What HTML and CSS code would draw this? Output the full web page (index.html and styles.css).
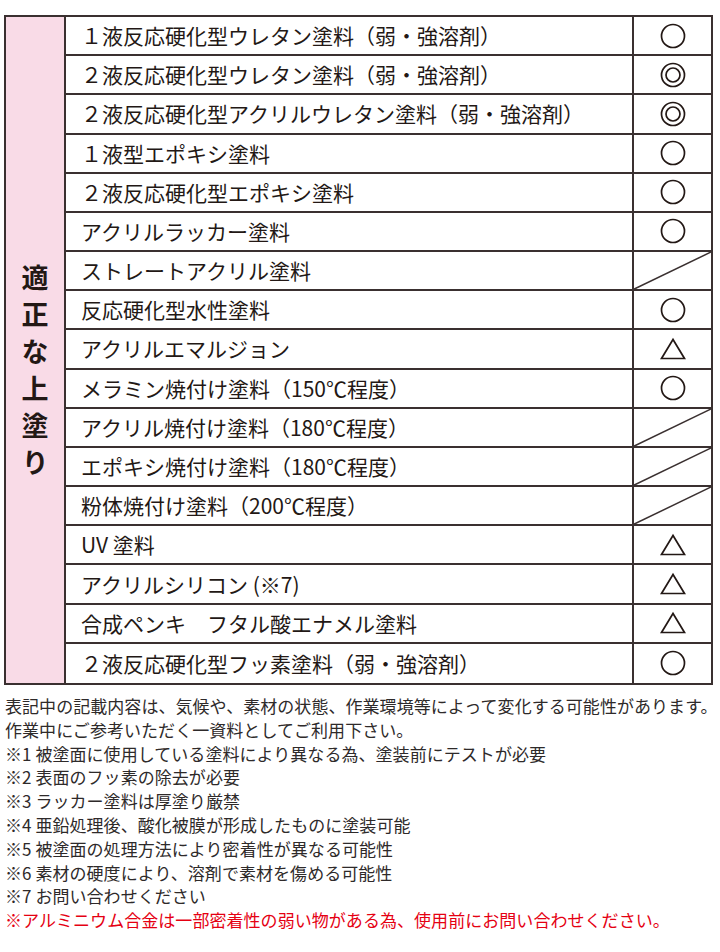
FILE: index.html
```html
<!DOCTYPE html>
<html lang="ja">
<head>
<meta charset="utf-8">
<title>適正な上塗り</title>
<link rel="stylesheet" href="styles.css">
</head>
<body>
<div class="page">
  <div class="chart">
    <div class="label"><span class="label-text">適正な上塗り</span></div>

    <div class="name">１液反応硬化型ウレタン塗料（弱・強溶剤）</div>
    <div class="mark"><svg class="sym" viewBox="0 0 26 26"><circle cx="13" cy="13" r="11.5"/></svg></div>

    <div class="name">２液反応硬化型ウレタン塗料（弱・強溶剤）</div>
    <div class="mark"><svg class="sym" viewBox="0 0 26 26"><circle cx="13" cy="13" r="11.5"/><circle cx="13" cy="13" r="7"/></svg></div>

    <div class="name">２液反応硬化型アクリルウレタン塗料（弱・強溶剤）</div>
    <div class="mark"><svg class="sym" viewBox="0 0 26 26"><circle cx="13" cy="13" r="11.5"/><circle cx="13" cy="13" r="7"/></svg></div>

    <div class="name">１液型エポキシ塗料</div>
    <div class="mark"><svg class="sym" viewBox="0 0 26 26"><circle cx="13" cy="13" r="11.5"/></svg></div>

    <div class="name">２液反応硬化型エポキシ塗料</div>
    <div class="mark"><svg class="sym" viewBox="0 0 26 26"><circle cx="13" cy="13" r="11.5"/></svg></div>

    <div class="name">アクリルラッカー塗料</div>
    <div class="mark"><svg class="sym" viewBox="0 0 26 26"><circle cx="13" cy="13" r="11.5"/></svg></div>

    <div class="name">ストレートアクリル塗料</div>
    <div class="mark"><svg class="slash" viewBox="0 0 100 100" preserveAspectRatio="none"><line x1="0" y1="100" x2="100" y2="0"/></svg></div>

    <div class="name">反応硬化型水性塗料</div>
    <div class="mark"><svg class="sym" viewBox="0 0 26 26"><circle cx="13" cy="13" r="11.5"/></svg></div>

    <div class="name">アクリルエマルジョン</div>
    <div class="mark"><svg class="sym" viewBox="0 0 26 26"><polygon points="13,3.5 1.5,22.5 24.5,22.5"/></svg></div>

    <div class="name">メラミン焼付け塗料（150℃程度）</div>
    <div class="mark"><svg class="sym" viewBox="0 0 26 26"><circle cx="13" cy="13" r="11.5"/></svg></div>

    <div class="name">アクリル焼付け塗料（180℃程度）</div>
    <div class="mark"><svg class="slash" viewBox="0 0 100 100" preserveAspectRatio="none"><line x1="0" y1="100" x2="100" y2="0"/></svg></div>

    <div class="name">エポキシ焼付け塗料（180℃程度）</div>
    <div class="mark"><svg class="slash" viewBox="0 0 100 100" preserveAspectRatio="none"><line x1="0" y1="100" x2="100" y2="0"/></svg></div>

    <div class="name">粉体焼付け塗料（200℃程度）</div>
    <div class="mark"><svg class="slash" viewBox="0 0 100 100" preserveAspectRatio="none"><line x1="0" y1="100" x2="100" y2="0"/></svg></div>

    <div class="name">UV 塗料</div>
    <div class="mark"><svg class="sym" viewBox="0 0 26 26"><polygon points="13,3.5 1.5,22.5 24.5,22.5"/></svg></div>

    <div class="name">アクリルシリコン (※7)</div>
    <div class="mark"><svg class="sym" viewBox="0 0 26 26"><polygon points="13,3.5 1.5,22.5 24.5,22.5"/></svg></div>

    <div class="name">合成ペンキ　フタル酸エナメル塗料</div>
    <div class="mark"><svg class="sym" viewBox="0 0 26 26"><polygon points="13,3.5 1.5,22.5 24.5,22.5"/></svg></div>

    <div class="name last">２液反応硬化型フッ素塗料（弱・強溶剤）</div>
    <div class="mark last"><svg class="sym" viewBox="0 0 26 26"><circle cx="13" cy="13" r="11.5"/></svg></div>
  </div>

  <div class="notes">
    <p>表記中の記載内容は、気候や、素材の状態、作業環境等によって変化する可能性があります。</p>
    <p>作業中にご参考いただく一資料としてご利用下さい。</p>
    <p>※1 被塗面に使用している塗料により異なる為、塗装前にテストが必要</p>
    <p>※2 表面のフッ素の除去が必要</p>
    <p>※3 ラッカー塗料は厚塗り厳禁</p>
    <p>※4 亜鉛処理後、酸化被膜が形成したものに塗装可能</p>
    <p>※5 被塗面の処理方法により密着性が異なる可能性</p>
    <p>※6 素材の硬度により、溶剤で素材を傷める可能性</p>
    <p>※7 お問い合わせください</p>
    <p class="warn">※アルミニウム合金は一部密着性の弱い物がある為、使用前にお問い合わせください。</p>
  </div>
</div>
</body>
</html>
```

FILE: styles.css
```css
html, body {
  margin: 0;
  padding: 0;
  background: #ffffff;
}

body {
  font-family: "Noto Sans CJK JP", "Noto Sans", "Liberation Sans", sans-serif;
  color: #231815;
}

.page {
  width: 720px;
  height: 952px;
  padding: 15px 0 0 4px;
  box-sizing: border-box;
}

.chart {
  display: grid;
  grid-template-columns: 60px 1fr 79px;
  grid-template-rows: repeat(17, 1fr);
  width: 709px;
  height: 670px;
  box-sizing: border-box;
  border: 2px solid #3a3030;
}

.label {
  grid-column: 1;
  grid-row: 1 / span 17;
  background: #f9dbe7;
  border-right: 2px solid #3a3030;
  display: flex;
  justify-content: center;
  align-items: flex-start;
  padding-top: 247px;
}

.label-text {
  writing-mode: vertical-rl;
  font-size: 27px;
  font-weight: 700;
  letter-spacing: 10px;
  line-height: 1;
  color: #231815;
}

.name {
  grid-column: 2;
  border-bottom: 2px solid #3a3030;
  display: flex;
  align-items: center;
  padding-left: 15px;
  font-size: 21px;
  line-height: 1;
  white-space: nowrap;
  color: #231815;
}

.mark {
  grid-column: 3;
  border-left: 2px solid #3a3030;
  border-bottom: 2px solid #3a3030;
  display: flex;
  align-items: center;
  justify-content: center;
  overflow: hidden;
}

.name.last,
.mark.last {
  border-bottom: none;
}

.sym {
  width: 26px;
  height: 26px;
  fill: none;
  stroke: #231815;
  stroke-width: 1.7;
}

.slash {
  width: 100%;
  height: 100%;
  display: block;
}

.slash line {
  stroke: #3a3030;
  stroke-width: 1.5;
  vector-effect: non-scaling-stroke;
}

.notes {
  margin-top: 9px;
  padding-left: 1px;
}

.notes p {
  margin: 0;
  font-size: 17px;
  line-height: 23.8px;
  letter-spacing: 0.05px;
  white-space: nowrap;
  color: #2e2a2a;
}

.notes p.warn {
  color: #e50012;
}
```
